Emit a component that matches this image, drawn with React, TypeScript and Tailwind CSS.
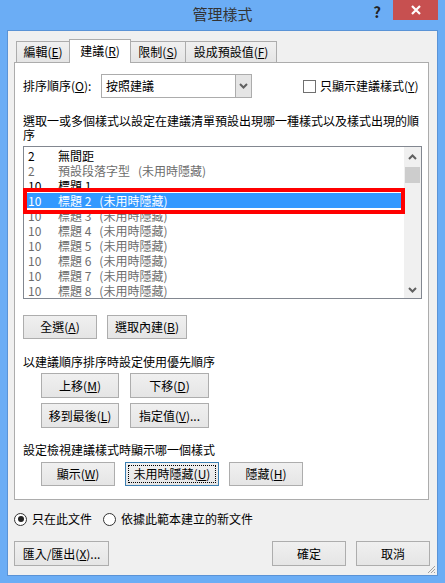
import clsx from "clsx"

const ROWS = [
    { n: "2", t: "無間距", dark: true },
    { n: "2", t: "預設段落字型", hide: true },
    { n: "10", t: "標題 1", dark: true },
    { n: "10", t: "標題 2", hide: true, sel: true },
    { n: "10", t: "標題 3", hide: true },
    { n: "10", t: "標題 4", hide: true },
    { n: "10", t: "標題 5", hide: true },
    { n: "10", t: "標題 6", hide: true },
    { n: "10", t: "標題 7", hide: true },
    { n: "10", t: "標題 8", hide: true },
]

function Btn({ children, className, focus }: { children: React.ReactNode; className?: string; focus?: boolean }) {
    return (
        <div
            className={clsx(
                "flex items-center justify-center border bg-gradient-to-b from-[#f0f0f0] to-[#e5e5e5] leading-[14px]",
                focus ? "border-[#3c7fb1] p-[2px]" : "border-[#adadad]",
                className
            )}
        >
            {focus ? (
                <div className="flex h-full w-full items-center justify-center border border-dotted border-black">{children}</div>
            ) : (
                children
            )}
        </div>
    )
}

function Tab({ children, active, className }: { children: React.ReactNode; active?: boolean; className?: string }) {
    return (
        <div
            className={clsx(
                "flex items-center justify-center border border-b-0 border-[#acacac] leading-[14px]",
                active
                    ? "relative z-10 -mb-px h-[24px] bg-white pb-[2px]"
                    : "h-[21px] bg-gradient-to-b from-[#f0f0f0] to-[#e5e5e5]",
                className
            )}
        >
            {children}
        </div>
    )
}

function Chevron({ up }: { up?: boolean }) {
    return (
        <svg width="9" height="6" viewBox="0 0 9 6">
            <path
                d={up ? "M1 5 L4.5 1.5 L8 5" : "M1 1 L4.5 4.5 L8 1"}
                fill="none"
                stroke="#606060"
                strokeWidth="2"
            />
        </svg>
    )
}

export default function App() {
    return (
        <div className="flex h-[583px] w-[445px] flex-col bg-[#6badf5] font-['Noto_Sans_CJK_TC','Microsoft_JhengHei',sans-serif] text-[12px] text-black">
            {/* Title bar */}
            <div className="grid h-[31px] grid-cols-[1fr_auto_1fr]">
                <div />
                <div className="pt-[3px] text-[15px] leading-[22px] text-[#333]">管理樣式</div>
                <div className="flex items-start justify-end pr-[7px]">
                    <div className="mr-[12px] pt-[3px] text-[15px] font-bold leading-[18px] text-[#222]">?</div>
                    <div className="flex h-[20px] w-[45px] items-center justify-center bg-[#c75050]">
                        <svg width="10" height="10" viewBox="0 0 10 10">
                            <path d="M1 1 L9 9 M9 1 L1 9" stroke="white" strokeWidth="2.2" />
                        </svg>
                    </div>
                </div>
            </div>

            {/* Client */}
            <div className="relative mx-[8px] flex h-[544px] flex-col bg-[#f0f0f0] px-[6px] pt-[8px] outline outline-1 outline-[#5a93d6]">
                {/* Tabs */}
                <div className="flex h-[23px] items-end pl-[2px]">
                    <Tab className="w-[54px]">
                        編輯(<u>E</u>)
                    </Tab>
                    <Tab active className="-ml-px w-[62px]">
                        建議(<u>R</u>)
                    </Tab>
                    <Tab className="-ml-px w-[56px]">
                        限制(<u>S</u>)
                    </Tab>
                    <Tab className="-ml-px w-[92px]">
                        設成預設值(<u>F</u>)
                    </Tab>
                </div>

                {/* Panel */}
                <div className="flex h-[438px] w-[415px] flex-col border border-[#acacac] bg-white pl-[8px]">
                    {/* Sort row */}
                    <div className="mt-[11px] flex h-[24px] items-center">
                        <div className="w-[78px] leading-[14px]">
                            排序順序(<u>O</u>):
                        </div>
                        <div className="flex h-[24px] w-[151px] border border-[#acacac] bg-white">
                            <div className="flex-1 pl-[4px] leading-[22px]">按照建議</div>
                            <div className="flex w-[16px] items-center justify-center border-l border-[#acacac] bg-[#e5e5e5]">
                                <Chevron />
                            </div>
                        </div>
                        <div className="ml-[51px] h-[13px] w-[13px] border border-[#707070] bg-white" />
                        <div className="ml-[4px] leading-[14px]">
                            只顯示建議樣式(<u>Y</u>)
                        </div>
                    </div>

                    {/* Description */}
                    <div className="mt-[16px] leading-[14px]">
                        <div>選取一或多個樣式以設定在建議清單預設出現哪一種樣式以及樣式出現的順</div>
                        <div>序</div>
                    </div>

                    {/* List */}
                    <div className="relative mt-[4px] flex h-[153px] w-[399px] border border-[#828790] bg-white">
                        <div className="flex-1 pt-[1px]">
                            {ROWS.map((r, i) => (
                                <div
                                    key={i}
                                    className={clsx(
                                        "mx-[3px] flex h-[15px] items-center pl-[1px] leading-[15px]",
                                        r.sel ? "bg-[#3399ff] text-white" : r.dark ? "text-black" : "text-[#6d6d6d]"
                                    )}
                                >
                                    <div className="w-[30px]">{r.n}</div>
                                    <div>{r.t}</div>
                                    {r.hide && <div className="ml-[8px]">(未用時隱藏)</div>}
                                </div>
                            ))}
                        </div>
                        <div className="flex w-[17px] flex-col items-center bg-[#f0f0f0]">
                            <div className="flex h-[17px] items-center justify-center pt-[2px]">
                                <Chevron up />
                            </div>
                            <div className="mt-[3px] h-[16px] w-[15px] bg-[#cdcdcd]" />
                            <div className="flex-1" />
                            <div className="flex h-[17px] items-center justify-center">
                                <Chevron />
                            </div>
                        </div>
                        {/* highlight annotation */}
                        <div className="absolute left-[-1px] top-[41px] h-[26px] w-[382px] border-[4px] border-[#ff0000]" />
                    </div>

                    {/* Select buttons */}
                    <div className="mt-[16px] flex gap-[10px]">
                        <Btn className="h-[24px] w-[74px]">
                            全選(<u>A</u>)
                        </Btn>
                        <Btn className="h-[24px] w-[80px]">
                            選取內建(<u>B</u>)
                        </Btn>
                    </div>

                    <div className="mt-[16px] h-[14px] leading-[14px]">以建議順序排序時設定使用優先順序</div>

                    <div className="ml-[18px] mt-[4px] grid w-[168px] grid-cols-[78px_79px] gap-x-[11px] gap-y-[5px]">
                        <Btn className="h-[25px]">
                            上移(<u>M</u>)
                        </Btn>
                        <Btn className="h-[25px]">
                            下移(<u>D</u>)
                        </Btn>
                        <Btn className="h-[25px]">
                            移到最後(<u>L</u>)
                        </Btn>
                        <Btn className="h-[25px]">
                            指定值(<u>V</u>)...
                        </Btn>
                    </div>

                    <div className="mt-[15px] h-[14px] leading-[14px]">設定檢視建議樣式時顯示哪一個樣式</div>

                    <div className="ml-[18px] mt-[5px] flex gap-[10px]">
                        <Btn className="h-[24px] w-[74px]">
                            顯示(<u>W</u>)
                        </Btn>
                        <Btn focus className="h-[24px] w-[94px]">
                            未用時隱藏(<u>U</u>)
                        </Btn>
                        <Btn className="h-[24px] w-[74px]">
                            隱藏(<u>H</u>)
                        </Btn>
                    </div>
                </div>

                {/* Radios */}
                <div className="mt-[12px] flex h-[14px] items-center leading-[14px]">
                    <div className="flex h-[13px] w-[13px] items-center justify-center rounded-full border border-[#333] bg-white">
                        <div className="h-[6px] w-[6px] rounded-full bg-[#222]" />
                    </div>
                    <div className="ml-[5px]">只在此文件</div>
                    <div className="ml-[11px] h-[13px] w-[13px] rounded-full border border-[#333] bg-white" />
                    <div className="ml-[5px]">依據此範本建立的新文件</div>
                </div>

                {/* Bottom buttons */}
                <div className="mt-[15px] flex items-center justify-between pr-[1px]">
                    <Btn className="h-[25px] w-[95px]">
                        匯入/匯出(<u>X</u>)...
                    </Btn>
                    <div className="flex gap-[10px]">
                        <Btn className="h-[25px] w-[74px]">確定</Btn>
                        <Btn className="h-[25px] w-[74px]">取消</Btn>
                    </div>
                </div>

                {/* size grip */}
                <svg className="absolute bottom-[1px] right-[1px]" width="10" height="10" viewBox="0 0 10 10">
                    <path d="M9 2 L2 9 M9 5 L5 9 M9 8 L8 9" stroke="#a0a0a0" strokeWidth="1" />
                </svg>
            </div>
        </div>
    )
}
